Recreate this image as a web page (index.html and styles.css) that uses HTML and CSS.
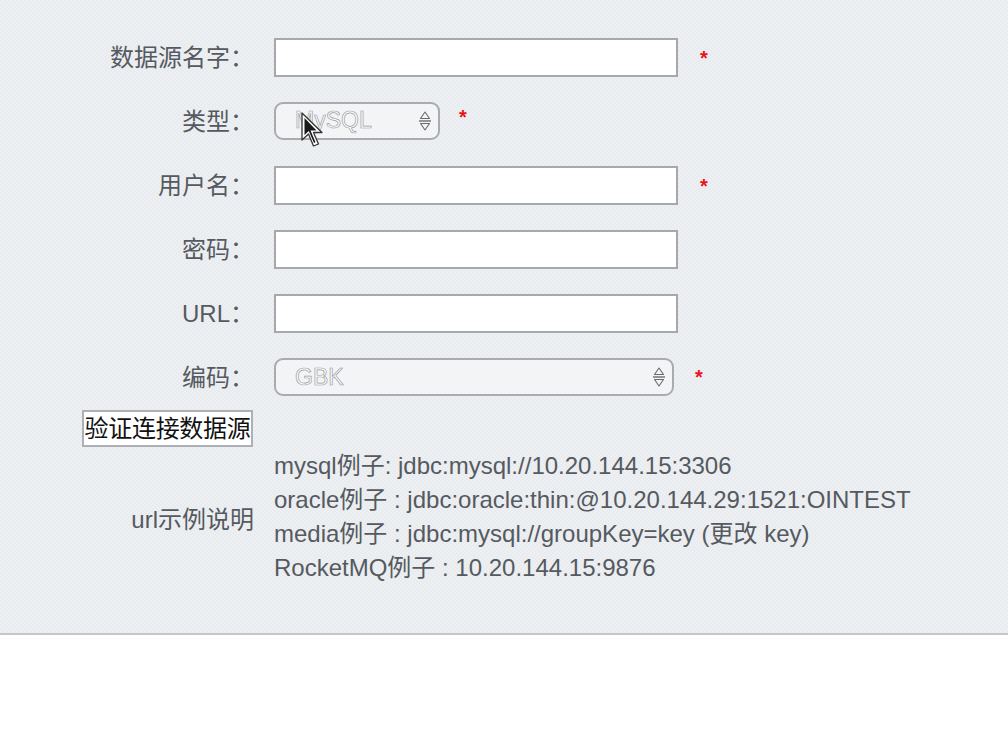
FILE: index.html
```html
<!DOCTYPE html>
<html lang="zh">
<head>
<meta charset="utf-8">
<title>数据源</title>
<link rel="stylesheet" href="styles.css">
</head>
<body>
<div class="panel">
  <form class="form">
    <div class="row">
      <label class="label">数据源名字：</label>
      <input class="text" type="text">
      <span class="req">*</span>
    </div>
    <div class="row">
      <label class="label">类型：</label>
      <div class="select small"><span class="val">MySQL</span><span class="arrows"><svg width="12" height="26" viewBox="0 0 12 26"><path d="M1.5 10.5 L6 4 L10.5 10.5 Z" fill="none" stroke="#6a6d70" stroke-width="1.1" stroke-linejoin="round"/><line x1="0" y1="13" x2="12" y2="13" stroke="#6a6d70" stroke-width="1.4"/><path d="M1.5 15.5 L6 22 L10.5 15.5 Z" fill="none" stroke="#6a6d70" stroke-width="1.1" stroke-linejoin="round"/></svg></span></div>
      <span class="req req-small">*</span>
    </div>
    <div class="row">
      <label class="label">用户名：</label>
      <input class="text" type="text">
      <span class="req">*</span>
    </div>
    <div class="row">
      <label class="label">密码：</label>
      <input class="text" type="password">
    </div>
    <div class="row">
      <label class="label">URL：</label>
      <input class="text" type="text">
    </div>
    <div class="row">
      <label class="label">编码：</label>
      <div class="select wide"><span class="val">GBK</span><span class="arrows"><svg width="12" height="26" viewBox="0 0 12 26"><path d="M1.5 10.5 L6 4 L10.5 10.5 Z" fill="none" stroke="#6a6d70" stroke-width="1.1" stroke-linejoin="round"/><line x1="0" y1="13" x2="12" y2="13" stroke="#6a6d70" stroke-width="1.4"/><path d="M1.5 15.5 L6 22 L10.5 15.5 Z" fill="none" stroke="#6a6d70" stroke-width="1.1" stroke-linejoin="round"/></svg></span></div>
      <span class="req req-wide">*</span>
    </div>
    <div class="btn-row">
      <button type="button" class="btn">验证连接数据源</button>
    </div>
    <div class="row examples">
      <span class="label">url示例说明</span>
      <div class="lines">
        <div>mysql例子: jdbc:mysql://10.20.144.15:3306</div>
        <div>oracle例子 : jdbc:oracle:thin:@10.20.144.29:1521:OINTEST</div>
        <div>media例子 : jdbc:mysql://groupKey=key (更改 key)</div>
        <div>RocketMQ例子 : 10.20.144.15:9876</div>
      </div>
    </div>
  </form>
  <svg class="cursor" width="26" height="40" viewBox="0 0 26 40"><path d="M1 1 L1 28 L7.5 22 L12.5 34 L17.5 32 L12.5 20.5 L21 20.5 Z" fill="#fff" stroke="#333" stroke-width="1.3" stroke-linejoin="round"/><path d="M3.5 6 L3.5 23 L7.8 19 L13 31 L14.5 30.3 L9.5 18.5 L15.5 18.5 Z" fill="#1a1a1a"/></svg>
</div>
</body>
</html>
```
FILE: styles.css
```css
html, body {
  margin: 0;
  padding: 0;
  background: #fff;
  font-family: "Liberation Sans", "Noto Sans CJK SC", sans-serif;
}
.panel {
  position: relative;
  background-color: #e9ecef;
  background-image:
    linear-gradient(45deg, rgba(255,255,255,0.18) 25%, transparent 25%, transparent 75%, rgba(255,255,255,0.18) 75%),
    linear-gradient(45deg, rgba(255,255,255,0.18) 25%, transparent 25%, transparent 75%, rgba(255,255,255,0.18) 75%);
  background-size: 4px 4px;
  background-position: 0 0, 2px 2px;
  border-bottom: 2px solid #c3c6cb;
  padding-top: 38px;
  height: 595px;
}
.form {
  display: flex;
  flex-direction: column;
}
.row {
  display: flex;
  align-items: center;
  height: 39px;
  margin-bottom: 25px;
}
.label {
  flex: none;
  text-align: right;
  padding-right: 20px;
  box-sizing: border-box;
  width: 274px;
  font-size: 24px;
  color: #555a60;
  margin-bottom: 5px;
}
.examples .label { margin-bottom: 0; }
.text {
  box-sizing: border-box;
  width: 404px;
  height: 39px;
  border: 2px solid #a6a8ab;
  background: #fff;
  margin: 0;
  padding: 0 6px;
  font-size: 20px;
}
.req {
  color: #e8141c;
  font-size: 20px;
  margin-left: 22px;
  position: relative;
  top: 1px;
  font-weight: bold;
}
.req-small { margin-left: 19px; top: -4px; }
.req-wide { margin-left: 21px; top: 0; }
.select {
  box-sizing: border-box;
  height: 38px;
  border: 2px solid #a9abae;
  border-radius: 9px;
  background: rgba(255,255,255,0.4);
  display: flex;
  align-items: center;
  justify-content: space-between;
  padding: 0 7px 0 19px;
  margin-top: -1px;
}
.select.small { width: 166px; margin-top: -2px; }
.select.wide { width: 400px; }
.val {
  font-size: 23px;
  color: #fff;
  -webkit-text-stroke: 0.7px #9a9da1;
}
.arrows { display: flex; align-items: center; }
.btn-row {
  display: flex;
  margin-top: -12px;
  padding-left: 82px;
}
.btn {
  box-sizing: border-box;
  width: 171px;
  height: 37px;
  border: 2px solid #adb0b4;
  background: #fff;
  color: #111;
  font-family: "Liberation Sans", "Noto Sans CJK SC", sans-serif;
  font-size: 24px;
  letter-spacing: -0.3px;
  white-space: nowrap;
  padding: 0;
  margin: 0;
  border-radius: 0;
  line-height: 33px;
}
.examples {
  height: auto;
  margin-top: 2px;
}
.lines {
  font-size: 24px;
  line-height: 34px;
  color: #555a60;
}
.cursor {
  position: absolute;
  left: 301px;
  top: 112px;
}
```
